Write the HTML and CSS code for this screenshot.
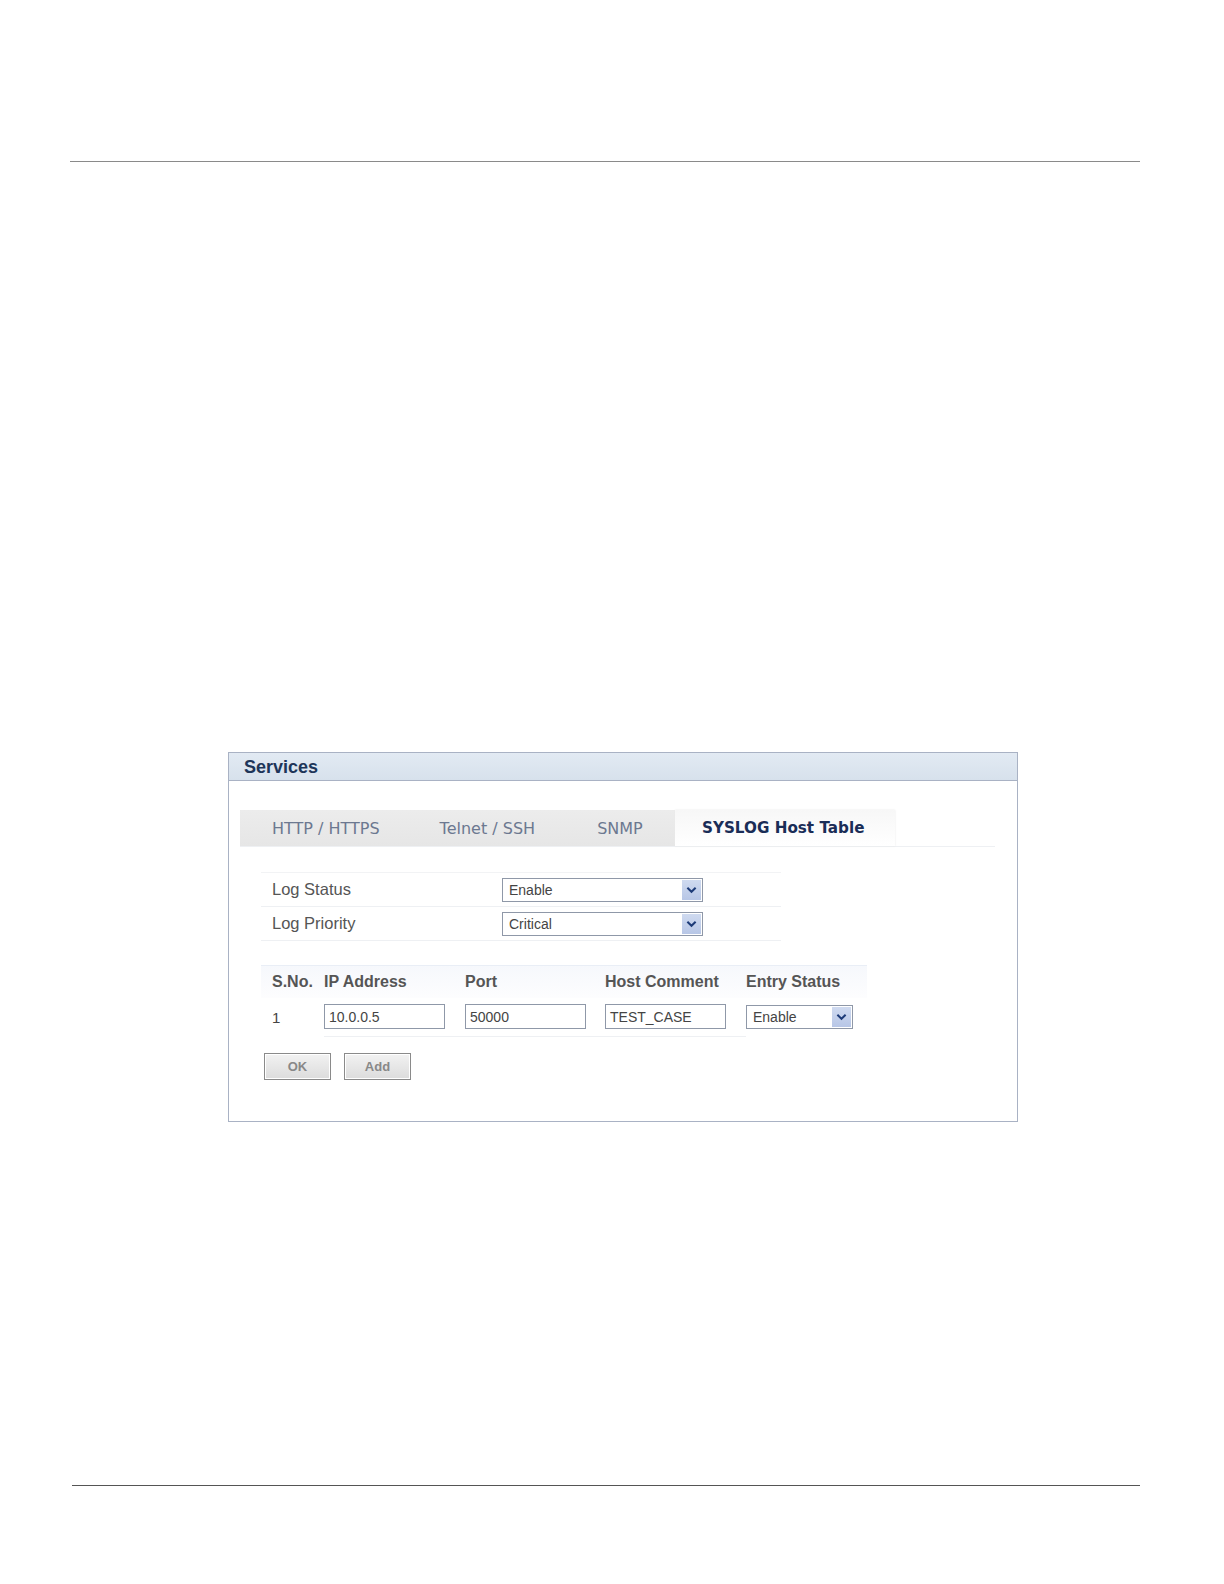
FILE: index.html
```html
<!DOCTYPE html>
<html>
<head>
<meta charset="utf-8">
<link rel="stylesheet" href="styles.css">
</head>
<body>
<div class="page">
  <div class="rule rule-top"></div>
  <div class="panel">
    <div class="panel-head">Services</div>
    <div class="panel-body">
      <div class="tabs">
        <div class="tab-group">
          <span class="tab t1">HTTP / HTTPS</span>
          <span class="tab t2">Telnet / SSH</span>
          <span class="tab t3">SNMP</span>
        </div>
        <div class="tab active">SYSLOG Host Table</div>
      </div>
      <div class="form">
        <div class="frow">
          <span class="flabel">Log Status</span>
          <div class="select wide"><span>Enable</span><i class="arrow"><svg viewBox="0 0 12 8" width="11" height="8"><path d="M1.5 1.5 L6 6 L10.5 1.5" fill="none" stroke="#1d3b78" stroke-width="2.2"/></svg></i></div>
        </div>
        <div class="frow">
          <span class="flabel">Log Priority</span>
          <div class="select wide"><span>Critical</span><i class="arrow"><svg viewBox="0 0 12 8" width="11" height="8"><path d="M1.5 1.5 L6 6 L10.5 1.5" fill="none" stroke="#1d3b78" stroke-width="2.2"/></svg></i></div>
        </div>
      </div>
      <div class="hosts">
        <div class="hrow head">
          <span class="c0">S.No.</span>
          <span class="c1">IP Address</span>
          <span class="c2">Port</span>
          <span class="c3">Host Comment</span>
          <span class="c4">Entry Status</span>
        </div>
        <div class="hrow data">
          <span class="c0">1</span>
          <span class="c1"><span class="input">10.0.0.5</span></span>
          <span class="c2"><span class="input">50000</span></span>
          <span class="c3"><span class="input">TEST_CASE</span></span>
          <span class="c4"><span class="select small"><span>Enable</span><i class="arrow"><svg viewBox="0 0 12 8" width="11" height="8"><path d="M1.5 1.5 L6 6 L10.5 1.5" fill="none" stroke="#1d3b78" stroke-width="2.2"/></svg></i></span></span>
        </div>
      </div>
      <div class="buttons">
        <span class="btn">OK</span>
        <span class="btn">Add</span>
      </div>
    </div>
  </div>
  <div class="rule rule-bottom"></div>
</div>
</body>
</html>
```
FILE: styles.css
```css
html, body {
  margin: 0;
  padding: 0;
  background: #fff;
}
.page {
  width: 1224px;
  height: 1584px;
  padding-top: 161px;
  box-sizing: border-box;
  font-family: "Liberation Sans", Arial, sans-serif;
}
.rule {
  height: 1px;
  background: #8a8a8a;
}
.rule-top {
  margin-left: 70px;
  width: 1070px;
}
.rule-bottom {
  margin-left: 72px;
  width: 1068px;
  margin-top: 363px;
  background: #555;
}
.panel {
  margin-top: 590px;
  margin-left: 228px;
  width: 790px;
  height: 370px;
  box-sizing: border-box;
  border: 1px solid #a9b2c4;
  background: #fff;
}
.panel-head {
  height: 28px;
  box-sizing: border-box;
  background: linear-gradient(#e2eaf3, #d7e1ec);
  border-bottom: 1px solid #a9b2c4;
  padding-left: 15px;
  font-weight: bold;
  font-size: 18px;
  line-height: 28px;
  color: #1d3559;
}
.panel-body {
  padding: 29px 0 0 11px;
}
.tabs {
  display: flex;
  height: 36px;
  width: 755px;
  border-bottom: 1px solid #eef0f3;
  font-family: "DejaVu Sans", Verdana, sans-serif;
  font-size: 16px;
}
.tab-group {
  display: flex;
  align-items: center;
  width: 435px;
  background: linear-gradient(#ececec, #e6e6e6);
}
.tab {
  color: #6c7890;
}
.t1 { margin-left: 32px; }
.t2 { margin-left: 60px; }
.t3 { margin-left: 62px; }
.tab.active {
  display: flex;
  align-items: center;
  width: 193px;
  padding-left: 27px;
  background: linear-gradient(#f7f7f7, #ffffff);
  box-shadow: 0 0 2px #e8e8e8;
  color: #1a2d57;
  font-weight: bold;
  font-size: 15.2px;
}
.form {
  margin-top: 25px;
  margin-left: 21px;
  width: 520px;
}
.frow {
  display: flex;
  align-items: center;
  height: 33px;
  border-bottom: 1px solid #eef0f3;
}
.frow:first-child {
  border-top: 1px solid #f2f3f5;
}
.flabel {
  width: 230px;
  padding-left: 11px;
  font-size: 16.5px;
  color: #555;
}
.select {
  display: flex;
  align-items: center;
  justify-content: space-between;
  box-sizing: border-box;
  border: 1px solid #8f98a8;
  background: #fff;
  font-size: 14px;
  color: #444;
  padding-left: 6px;
}
.select.wide {
  width: 201px;
  height: 24px;
}
.select.small {
  width: 107px;
  height: 24px;
}
.arrow {
  display: flex;
  align-items: center;
  justify-content: center;
  width: 19px;
  height: 20px;
  margin-right: 1px;
  background: linear-gradient(#cfdaf0, #b7c6e6);
}
.hosts {
  margin-top: 24px;
  margin-left: 21px;
  width: 606px;
}
.hrow {
  display: flex;
  align-items: center;
}
.hrow.head {
  height: 32px;
  border-top: 1px solid #e9eef6;
  background: linear-gradient(#f6f8fc, #fdfdfe);
  font-weight: bold;
  font-size: 16px;
  color: #555;
}
.hrow.data {
  height: 38px;
  font-size: 15px;
  color: #444;
}
.c0 { padding-left: 11px; box-sizing: border-box; width: 63px; }
.c1 { width: 141px; }
.c2 { width: 140px; }
.c3 { width: 141px; }
.c4 { width: 120px; }
.hrow.data .c1, .hrow.data .c2, .hrow.data .c3 {
  height: 38px;
  display: flex;
  align-items: center;
  border-bottom: 1px solid #eef0f3;
}
.input {
  display: flex;
  align-items: center;
  box-sizing: border-box;
  width: 121px;
  height: 25px;
  border: 1px solid #8f98a8;
  padding-left: 4px;
  font-size: 14px;
  color: #444;
}
.buttons {
  display: flex;
  gap: 13px;
  margin-top: 17px;
  margin-left: 24px;
}
.btn {
  display: flex;
  align-items: center;
  justify-content: center;
  box-sizing: border-box;
  width: 67px;
  height: 27px;
  border: 1px solid #8a8a8a;
  background: linear-gradient(#f2f2f2, #dcdcdc);
  box-shadow: inset 0 0 0 1px #fff;
  font-size: 13px;
  font-weight: bold;
  color: #888;
}
```
